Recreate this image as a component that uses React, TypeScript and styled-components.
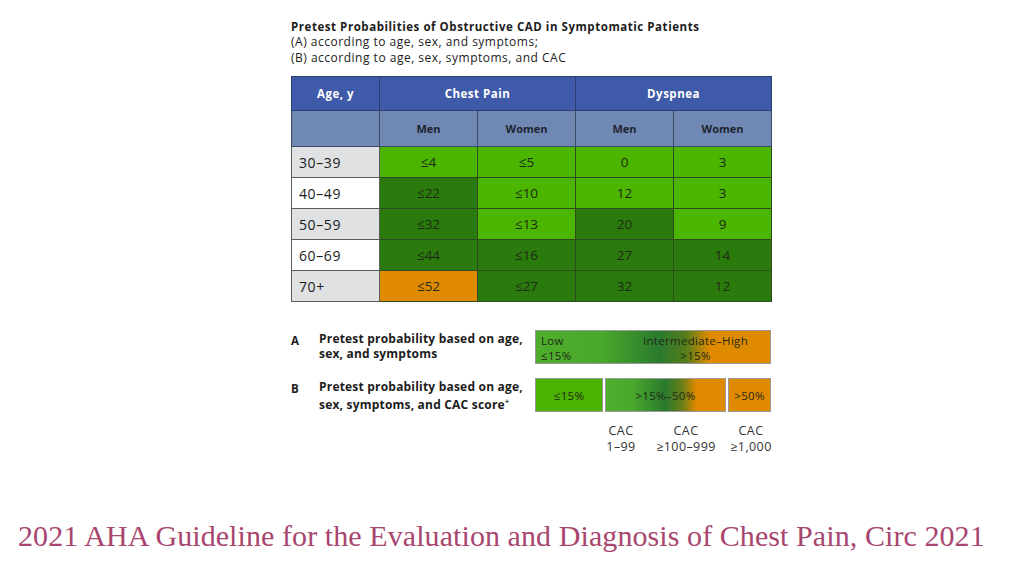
import { FC } from 'react';
import styled, { createGlobalStyle } from 'styled-components';

type Shade = 'light' | 'dark' | 'orange';

interface Row {
  age: string;
  cells: [string, Shade][];
}

const rows: Row[] = [
  { age: '30–39', cells: [['≤4', 'light'], ['≤5', 'light'], ['0', 'light'], ['3', 'light']] },
  { age: '40–49', cells: [['≤22', 'dark'], ['≤10', 'light'], ['12', 'light'], ['3', 'light']] },
  { age: '50–59', cells: [['≤32', 'dark'], ['≤13', 'light'], ['20', 'dark'], ['9', 'light']] },
  { age: '60–69', cells: [['≤44', 'dark'], ['≤16', 'dark'], ['27', 'dark'], ['14', 'dark']] },
  { age: '70+', cells: [['≤52', 'orange'], ['≤27', 'dark'], ['32', 'dark'], ['12', 'dark']] },
];

const shadeColor: Record<Shade, string> = {
  light: '#4bb500',
  dark: '#2b7a0e',
  orange: '#e08a00',
};

const App: FC = () => {
  return (
    <>
      <GlobalStyle />
      <Page>
        <Figure>
          <TitleBlock>
            <TitleBold>Pretest Probabilities of Obstructive CAD in Symptomatic Patients</TitleBold>
            <TitleLine>(A) according to age, sex, and symptoms;</TitleLine>
            <TitleLine>(B) according to age, sex, symptoms, and CAC</TitleLine>
          </TitleBlock>

          <Table>
            <colgroup>
              <col style={{ width: 88 }} />
              <col style={{ width: 98 }} />
              <col style={{ width: 98 }} />
              <col style={{ width: 98 }} />
              <col style={{ width: 98 }} />
            </colgroup>
            <thead>
              <tr>
                <HeadCell>Age, y</HeadCell>
                <HeadCell colSpan={2}>Chest Pain</HeadCell>
                <HeadCell colSpan={2}>Dyspnea</HeadCell>
              </tr>
              <tr>
                <SubCell />
                <SubCell>Men</SubCell>
                <SubCell>Women</SubCell>
                <SubCell>Men</SubCell>
                <SubCell>Women</SubCell>
              </tr>
            </thead>
            <tbody>
              {rows.map((r, i) => (
                <tr key={r.age}>
                  <AgeCell $grey={i % 2 === 0}>{r.age}</AgeCell>
                  {r.cells.map(([v, s], j) => (
                    <ValueCell key={j} $shade={s}>
                      {v}
                    </ValueCell>
                  ))}
                </tr>
              ))}
            </tbody>
          </Table>

          <Legend>
            <LegendRow>
              <LegendLetter>A</LegendLetter>
              <LegendText>
                Pretest probability based on age,
                <br />
                sex, and symptoms
              </LegendText>
              <BarA>
                <BarALeft>
                  <span>Low</span>
                  <span>≤15%</span>
                </BarALeft>
                <BarARight>
                  <span>Intermediate–High</span>
                  <span>&gt;15%</span>
                </BarARight>
              </BarA>
            </LegendRow>
            <LegendRow>
              <LegendLetter>B</LegendLetter>
              <LegendText>
                Pretest probability based on age,
                <br />
                sex, symptoms, and CAC score<Sup>+</Sup>
              </LegendText>
              <BarB>
                <Segment $w={68} $bg="#4bb200">≤15%</Segment>
                <Segment
                  $w={121}
                  $bg="linear-gradient(90deg, #4fae2c 0%, #4aa82c 22%, #2a7a2e 50%, #6a7f18 64%, #e08a00 76%, #e08a00 100%)"
                >
                  &gt;15%–50%
                </Segment>
                <Segment $w={43} $bg="#e08a00">&gt;50%</Segment>
              </BarB>
            </LegendRow>
            <CacRow>
              <CacLabel $w={60}>
                CAC
                <br />
                1–99
              </CacLabel>
              <CacLabel $w={70}>
                CAC
                <br />
                ≥100–999
              </CacLabel>
              <CacLabel $w={60}>
                CAC
                <br />
                ≥1,000
              </CacLabel>
            </CacRow>
          </Legend>
        </Figure>
        <Footer>2021 AHA Guideline for the Evaluation and Diagnosis of Chest Pain, Circ 2021</Footer>
      </Page>
    </>
  );
};

export default App;

const GlobalStyle = createGlobalStyle`
  html, body {
    margin: 0;
    padding: 0;
    background: #ffffff;
  }
`;

const Page = styled.div`
  width: 1024px;
  height: 561px;
  overflow: hidden;
  display: flex;
  flex-direction: column;
  font-family: 'Open Sans', 'Liberation Sans', sans-serif;
  color: #1c1c1c;
`;

const Figure = styled.div`
  margin-left: 291px;
  width: 480px;
  padding-top: 20px;
`;

const TitleBlock = styled.div`
  margin-bottom: 10.5px;
  white-space: nowrap;
`;

const TitleBold = styled.div`
  font-size: 11.5px;
  line-height: 13.5px;
  font-weight: 700;
  letter-spacing: 0.55px;
`;

const TitleLine = styled.div`
  font-size: 12px;
  line-height: 16px;
  font-weight: 400;
  letter-spacing: 0.5px;
`;

const Table = styled.table`
  border-collapse: collapse;
  table-layout: fixed;
  width: 480px;
  border: 1px solid #3a4a3a;
`;

const HeadCell = styled.th`
  background: #3f5aa9;
  color: #ffffff;
  height: 33px;
  padding: 0;
  font-size: 11.5px;
  font-weight: 700;
  letter-spacing: 0.5px;
  text-align: center;
  border: 1px solid #2c3d6e;
`;

const SubCell = styled.th`
  background: #7089b4;
  color: #1e2430;
  height: 35px;
  padding: 0;
  font-size: 11px;
  font-weight: 700;
  text-align: center;
  border: 1px solid #3b4a66;
`;

const AgeCell = styled.td<{ $grey: boolean }>`
  background: ${(p) => (p.$grey ? '#dfe1e3' : '#ffffff')};
  height: 30px;
  padding: 0 0 0 7px;
  font-size: 14px;
  letter-spacing: 0.6px;
  text-align: left;
  border: 1px solid #5a5f5a;
`;

const ValueCell = styled.td<{ $shade: Shade }>`
  background: ${(p) => shadeColor[p.$shade]};
  height: 30px;
  padding: 0;
  font-size: 13.5px;
  text-align: center;
  color: #1e2a14;
  border: 1px solid #2e4a1e;
`;

const Legend = styled.div`
  display: flex;
  flex-direction: column;
  margin-top: 28px;
`;

const LegendRow = styled.div`
  display: flex;
  align-items: center;
  height: 34px;
  margin-bottom: 14px;
`;

const LegendLetter = styled.div`
  width: 28px;
  font-size: 11.5px;
  font-weight: 700;
  align-self: flex-start;
  padding-top: 3px;
`;

const LegendText = styled.div`
  width: 216px;
  font-size: 12px;
  line-height: 15px;
  font-weight: 700;
  letter-spacing: 0.2px;
  white-space: nowrap;
  align-self: flex-start;
  padding-top: 1px;
`;

const Sup = styled.sup`
  font-size: 7px;
`;

const BarA = styled.div`
  flex: 1;
  height: 34px;
  box-sizing: border-box;
  border: 1px solid #9a9a9a;
  background: linear-gradient(
    90deg,
    #4ead2c 0%,
    #4aa82c 28%,
    #2a7a2e 53%,
    #557d1c 64%,
    #e08a00 74%,
    #e08a00 100%
  );
  display: flex;
  justify-content: space-between;
  padding: 2px 22px 0 5px;
  font-size: 11.5px;
  line-height: 15px;
  letter-spacing: 0.3px;
  color: #1e2a14;
`;

const BarALeft = styled.div`
  display: flex;
  flex-direction: column;
`;

const BarARight = styled.div`
  display: flex;
  flex-direction: column;
  align-items: center;
`;

const BarB = styled.div`
  flex: 1;
  display: flex;
  gap: 2px;
  height: 34px;
`;

const Segment = styled.div<{ $w: number; $bg: string }>`
  width: ${(p) => p.$w}px;
  box-sizing: border-box;
  border: 1px solid #9a9a9a;
  background: ${(p) => p.$bg};
  display: flex;
  align-items: center;
  justify-content: center;
  font-size: 11.5px;
  letter-spacing: 0.3px;
  color: #1e2a14;
`;

const CacRow = styled.div`
  display: flex;
  margin-left: 300px;
  margin-top: -3px;
`;

const CacLabel = styled.div<{ $w: number }>`
  width: ${(p) => p.$w}px;
  flex-shrink: 0;
  text-align: center;
  font-size: 12.5px;
  line-height: 15.5px;
  letter-spacing: 0.4px;
  white-space: nowrap;
  color: #333333;
`;

const Footer = styled.div`
  margin-top: auto;
  margin-bottom: 8px;
  padding-left: 18px;
  font-family: 'Liberation Serif', 'DejaVu Serif', serif;
  font-size: 30px;
  letter-spacing: 0.08px;
  color: #a8466f;
  white-space: nowrap;
`;
